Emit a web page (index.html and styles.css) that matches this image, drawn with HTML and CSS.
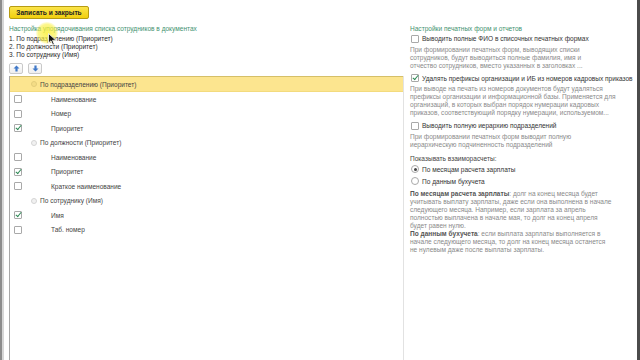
FILE: index.html
```html
<!DOCTYPE html>
<html lang="ru">
<head>
<meta charset="utf-8">
<link rel="stylesheet" href="styles.css">
</head>
<body>
<div class="frame">
  <div class="toolbar">
    <button class="btn-main">Записать и закрыть</button>
  </div>
  <div class="columns">
    <div class="left">
      <div class="heading">Настройка упорядочивания списка сотрудников в документах</div>
      <div class="order">
        <div>1. По подразделению (Приоритет)</div>
        <div>2. По должности (Приоритет)</div>
        <div>3. По сотруднику (Имя)</div>
      </div>
      <div class="arrows">
        <span class="abtn"><svg width="7" height="7" viewBox="0 0 7 7"><path d="M3.5 0.5 L6.5 3.5 L4.6 3.5 L4.6 6.5 L2.4 6.5 L2.4 3.5 L0.5 3.5 Z" fill="#3f78c8"/></svg></span>
        <span class="abtn"><svg width="7" height="7" viewBox="0 0 7 7"><path d="M3.5 6.5 L6.5 3.5 L4.6 3.5 L4.6 0.5 L2.4 0.5 L2.4 3.5 L0.5 3.5 Z" fill="#3f78c8"/></svg></span>
      </div>
      <div class="tree">
        <div class="row group selected"><span class="dot"></span>По подразделению (Приоритет)</div>
        <div class="row child"><span class="cb"></span><span class="lbl">Наименование</span></div>
        <div class="row child"><span class="cb"></span><span class="lbl">Номер</span></div>
        <div class="row child"><span class="cb on"></span><span class="lbl">Приоритет</span></div>
        <div class="row group"><span class="dot"></span>По должности (Приоритет)</div>
        <div class="row child"><span class="cb"></span><span class="lbl">Наименование</span></div>
        <div class="row child"><span class="cb on"></span><span class="lbl">Приоритет</span></div>
        <div class="row child"><span class="cb"></span><span class="lbl">Краткое наименование</span></div>
        <div class="row group"><span class="dot"></span>По сотруднику (Имя)</div>
        <div class="row child"><span class="cb on"></span><span class="lbl">Имя</span></div>
        <div class="row child"><span class="cb"></span><span class="lbl">Таб. номер</span></div>
      </div>
    </div>
    <div class="right">
      <div class="heading">Настройки печатных форм и отчетов</div>
      <div class="opt first"><span class="cb"></span>Выводить полные ФИО в списочных печатных формах</div>
      <div class="desc">При формировании печатных форм, выводящих списки<br>сотрудников, будут выводиться полные фамилия, имя и<br>отчество сотрудников, вместо указанных в заголовках ...</div>
      <div class="opt"><span class="cb on"></span>Удалять префиксы организации и ИБ из номеров кадровых приказов</div>
      <div class="desc">При выводе на печать из номеров документов будут удаляться<br>префиксы организации и информационной базы. Применяется для<br>организаций, в которых выбран порядок нумерации кадровых<br>приказов, соответствующий порядку нумерации, используемом...</div>
      <div class="opt"><span class="cb"></span>Выводить полную иерархию подразделений</div>
      <div class="desc">При формировании печатных форм выводит полную<br>иерархическую подчиненность подразделений</div>
      <div class="label">Показывать взаиморасчеты:</div>
      <div class="radio-row"><span class="rb on"></span>По месяцам расчета зарплаты</div>
      <div class="radio-row"><span class="rb"></span>По данным бухучета</div>
      <div class="desc note"><b>По месяцам расчета зарплаты</b>: долг на конец месяца будет<br>учитывать выплату зарплаты, даже если она выполнена в начале<br>следующего месяца. Например, если зарплата за апрель<br>полностью выплачена в начале мая, то долг на конец апреля<br>будет равен нулю.<br><b>По данным бухучета</b>: если выплата зарплаты выполняется в<br>начале следующего месяца, то долг на конец месяца останется<br>не нулевым даже после выплаты зарплаты.</div>
    </div>
  </div>
  <div class="cursor-glow"></div>
  <svg class="cursor" width="9" height="13" viewBox="0 0 9 13"><path d="M0.5 0.5 L0.5 10 L3 7.8 L4.8 12 L6.3 11.3 L4.6 7.3 L8 7.3 Z" fill="#111" stroke="#fff" stroke-width="0.8"/></svg>
</div>
</body>
</html>
```
FILE: styles.css
```css
html, body {
  margin: 0;
  padding: 0;
  background: #fff;
}
body {
  font-family: "Liberation Sans", Arial, sans-serif;
  font-size: 6.55px;
  color: #333;
}
.frame {
  position: relative;
  box-sizing: border-box;
  width: 640px;
  height: 360px;
  overflow: hidden;
  border-left: 2px solid #8c8c8c;
  border-right: 3px solid #4b4b4b;
  box-shadow: inset 2px 0 0 #d6d6d6;
  padding: 6px 0 0 7px;
}
.toolbar {
  height: 13px;
}
.btn-main {
  display: block;
  box-sizing: border-box;
  width: 80px;
  height: 13px;
  padding: 0;
  margin: 0;
  font-family: "Liberation Sans", Arial, sans-serif;
  font-size: 6.6px;
  font-weight: bold;
  color: #222;
  background: linear-gradient(#fbe44a, #f1cf0e);
  border: 1px solid #b79c12;
  border-radius: 2px;
  line-height: 11px;
}
.columns {
  display: flex;
  margin-top: 6px;
}
.left {
  width: 395px;
  flex: none;
}
.right {
  margin-left: 6px;
  flex: 1;
}
.heading {
  color: #3f9270;
  line-height: 8px;
  white-space: nowrap;
}
.order {
  margin-top: 2px;
  line-height: 8px;
  color: #2a2a2a;
}
.arrows {
  display: flex;
  gap: 5px;
  margin-top: 4px;
  height: 11px;
}
.abtn {
  box-sizing: border-box;
  width: 14px;
  height: 11px;
  border: 1px solid #c9c9c9;
  border-radius: 2px;
  background: linear-gradient(#ffffff, #eeeeee);
  display: flex;
  align-items: center;
  justify-content: center;
}
.abtn svg { display: block; }
.tree {
  margin-top: 2px;
  height: 300px;
  border-left: 1px solid #a8a8a8;
  border-right: 1px solid #e2e2e2;
}
.row {
  height: 14.5px;
  display: flex;
  align-items: center;
  color: #444;
  white-space: nowrap;
}
.row.selected {
  box-sizing: border-box;
  height: 16px;
  background: #fce58f;
  border-top: 1px solid #d5bf68;
  border-bottom: 1px solid #f3db7e;
}
.group {
  padding-left: 21px;
}
.dot {
  width: 4px;
  height: 4px;
  border-radius: 50%;
  border: 1px solid #d4d4d4;
  background: #f1f1f1;
  margin-right: 3px;
  flex: none;
}
.selected .dot {
  border-color: #e3cd7a;
  background: #f4dd86;
}
.child {
  padding-left: 4px;
}
.child .lbl {
  margin-left: 29px;
}
.cb {
  box-sizing: border-box;
  width: 8px;
  height: 8px;
  border: 1px solid #a9a9a9;
  border-radius: 1px;
  background: #fff;
  flex: none;
  position: relative;
}
.cb.on::after {
  content: "";
  position: absolute;
  left: 1.6px;
  top: -1px;
  width: 2.4px;
  height: 5px;
  border-right: 1.3px solid #2f8a56;
  border-bottom: 1.3px solid #2f8a56;
  transform: rotate(40deg);
}
.opt {
  display: flex;
  align-items: center;
  height: 11px;
  margin-top: 3px;
  color: #333;
  white-space: nowrap;
}
.opt.first {
  margin-top: 0;
}
.opt .cb {
  margin-right: 3px;
  margin-left: 1px;
}
.desc {
  margin-top: 1.5px;
  line-height: 8px;
  color: #8a8a8a;
  white-space: nowrap;
}
.desc b {
  color: #555;
}
.label {
  margin-top: 6px;
  line-height: 8px;
  color: #444;
}
.radio-row {
  display: flex;
  align-items: center;
  height: 11px;
  margin-top: 1px;
  color: #333;
}
.rb {
  box-sizing: border-box;
  width: 8px;
  height: 8px;
  border-radius: 50%;
  border: 1px solid #a9a9a9;
  background: #fff;
  margin-left: 1px;
  margin-right: 3px;
  position: relative;
}
.rb.on::after {
  content: "";
  position: absolute;
  left: 1.5px;
  top: 1.5px;
  width: 3px;
  height: 3px;
  border-radius: 50%;
  background: #444;
}
.note {
  margin-top: 3px;
}
.cursor-glow {
  position: absolute;
  left: 34px;
  top: 22px;
  width: 22px;
  height: 22px;
  border-radius: 50%;
  background: radial-gradient(circle, rgba(250, 240, 60, 0.85) 0%, rgba(250, 240, 60, 0.6) 55%, rgba(250, 240, 60, 0) 75%);
}
.cursor {
  position: absolute;
  left: 46px;
  top: 33px;
}
```
